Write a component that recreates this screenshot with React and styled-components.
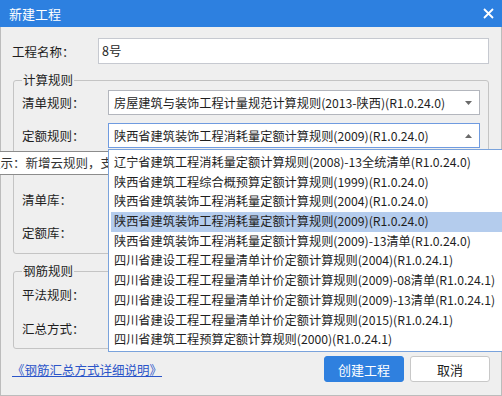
import React from "react";
import styled, { createGlobalStyle } from "styled-components";

const GlobalStyle = createGlobalStyle`
  body {
    margin: 0;
    background: #ffffff;
    font-family: "Noto Sans CJK SC", "Noto Sans", sans-serif;
  }
`;

const Window = styled.div`
  position: relative;
  width: 502px;
  height: 396px;
  display: flex;
  flex-direction: column;
  overflow: hidden;
  font-family: "Noto Sans CJK SC", "Noto Sans", sans-serif;
  font-size: 12.5px;
  color: #1e1e1e;
`;

const TitleBar = styled.div`
  height: 27px;
  flex: none;
  background: #2d80e0;
  color: #ffffff;
  display: flex;
  align-items: center;
  justify-content: space-between;
  padding: 0 8px 0 9px;
  font-size: 13px;
`;

const Body = styled.div`
  flex: 1;
  background: #efefef;
  border: 1px solid #bcbcbc;
  border-top: none;
  padding: 11px 11px 0 11px;
  display: flex;
  flex-direction: column;
`;

const NameRow = styled.div`
  display: flex;
  align-items: center;
  margin-right: 1px;
`;

const Label = styled.div`
  width: ${(p) => p.width || 86}px;
  flex: none;
  white-space: nowrap;
`;

const TextInput = styled.div`
  flex: 1;
  height: 26px;
  box-sizing: border-box;
  background: #ffffff;
  border: 1px solid #c6c9d0;
  padding: 0 3px;
  line-height: 24px;
`;

const Group = styled.fieldset`
  margin: ${(p) => p.top}px 1px 0 1px;
  padding: ${(p) => p.pt || 2}px 8px ${(p) => p.pb || 8}px 8px;
  border: 1px solid #c4c4c4;
  border-radius: 3px;
  display: flex;
  flex-direction: column;
  gap: ${(p) => p.gap || 8}px;
  min-width: 0;
`;

const Legend = styled.legend`
  padding: 0 1px;
  line-height: 16px;
`;

const Row = styled.div`
  display: flex;
  align-items: center;
  height: ${(p) => p.h || 25}px;
`;

const Select = styled.div`
  flex: 1;
  height: 25px;
  box-sizing: border-box;
  background: #ffffff;
  border: 1px solid ${(p) => (p.focused ? "#6f9be0" : "#b3b6bd")};
  display: flex;
  align-items: center;
  justify-content: space-between;
  padding: 0 7px 0 5px;
  white-space: nowrap;
  overflow: hidden;
  font-size: 12.2px;
`;

const Caret = ({ up }) => (
  <svg width="7" height="4" viewBox="0 0 7 4">
    <path d={up ? "M0 4 L3.5 0 L7 4 Z" : "M0 0 L7 0 L3.5 4 Z"} fill="#6a6a6a" />
  </svg>
);

const Footer = styled.div`
  margin-top: 7px;
  display: flex;
  align-items: center;
  justify-content: space-between;
`;

const HelpLink = styled.a`
  color: #2b55c9;
  text-decoration: underline;
  cursor: pointer;
`;

const Buttons = styled.div`
  display: flex;
  gap: 6px;
`;

const Button = styled.button`
  width: 80px;
  height: 26px;
  box-sizing: border-box;
  border-radius: 3px;
  font-family: inherit;
  font-size: 13px;
  padding: 0;
  background: ${(p) => (p.primary ? "#2f80df" : "#ffffff")};
  color: ${(p) => (p.primary ? "#ffffff" : "#1e1e1e")};
  border: 1px solid ${(p) => (p.primary ? "#2f80df" : "#c8c8c8")};
`;

const Tooltip = styled.div`
  position: absolute;
  left: -17px;
  top: 151px;
  height: 24px;
  box-sizing: border-box;
  background: #ffffff;
  border: 1px solid #8c8c8c;
  padding: 0 4px;
  line-height: 22px;
  white-space: nowrap;
  color: #333333;
  z-index: 1;
`;

const DropList = styled.ul`
  position: absolute;
  left: 108px;
  top: 149px;
  width: 400px;
  height: 203px;
  box-sizing: border-box;
  margin: 0;
  list-style: none;
  background: #ffffff;
  border: 1px solid #7aa3dc;
  padding: 3px 0 3px 2px;
  font-size: 12.2px;
  z-index: 2;
`;

const DropItem = styled.li`
  height: 19.7px;
  line-height: 19.7px;
  padding-left: 3px;
  white-space: nowrap;
  background: ${(p) => (p.active ? "#b4cced" : "transparent")};
`;

const CloseIcon = () => (
  <svg width="11" height="11" viewBox="0 0 11 11">
    <path d="M1 1 L10 10 M10 1 L1 10" stroke="#ffffff" strokeWidth="1.8" />
  </svg>
);

const quotaRules = [
  "辽宁省建筑工程消耗量定额计算规则(2008)-13全统清单(R1.0.24.0)",
  "陕西省建筑工程综合概预算定额计算规则(1999)(R1.0.24.0)",
  "陕西省建筑装饰工程消耗量定额计算规则(2004)(R1.0.24.0)",
  "陕西省建筑装饰工程消耗量定额计算规则(2009)(R1.0.24.0)",
  "陕西省建筑装饰工程消耗量定额计算规则(2009)-13清单(R1.0.24.0)",
  "四川省建设工程工程量清单计价定额计算规则(2004)(R1.0.24.1)",
  "四川省建设工程工程量清单计价定额计算规则(2009)-08清单(R1.0.24.1)",
  "四川省建设工程工程量清单计价定额计算规则(2009)-13清单(R1.0.24.1)",
  "四川省建设工程工程量清单计价定额计算规则(2015)(R1.0.24.1)",
  "四川省建筑工程预算定额计算规则(2000)(R1.0.24.1)",
];

const selected = quotaRules[3];

export default function App() {
  return (
    <>
      <GlobalStyle />
      <Window>
        <TitleBar>
          <span>新建工程</span>
          <CloseIcon />
        </TitleBar>
        <Body>
          <NameRow>
            <Label>工程名称：</Label>
            <TextInput>8号</TextInput>
          </NameRow>

          <Group top={8}>
            <Legend>计算规则</Legend>
            <Row>
              <Label>清单规则：</Label>
              <Select>
                <span>房屋建筑与装饰工程计量规范计算规则(2013-陕西)(R1.0.24.0)</span>
                <Caret />
              </Select>
            </Row>
            <Row>
              <Label>定额规则：</Label>
              <Select focused>
                <span>{selected}</span>
                <Caret up />
              </Select>
            </Row>
            <Row h={23} />
            <Row>
              <Label>清单库：</Label>
              <Select>
                <span>工程量清单项目计量规范(2013-陕西)</span>
                <Caret />
              </Select>
            </Row>
            <Row>
              <Label>定额库：</Label>
              <Select>
                <span>陕西省建筑装饰工程消耗量定额(2009)</span>
                <Caret />
              </Select>
            </Row>
          </Group>

          <Group top={9} pt={3} pb={7} gap={9}>
            <Legend>钢筋规则</Legend>
            <Row>
              <Label>平法规则：</Label>
              <Select>
                <span>16系平法规则</span>
                <Caret />
              </Select>
            </Row>
            <Row>
              <Label>汇总方式：</Label>
              <Select>
                <span>按外皮计算钢筋长度(不考虑弯曲调整值)</span>
                <Caret />
              </Select>
            </Row>
          </Group>

          <Footer>
            <HelpLink>《钢筋汇总方式详细说明》</HelpLink>
            <Buttons>
              <Button primary>创建工程</Button>
              <Button>取消</Button>
            </Buttons>
          </Footer>
        </Body>

        <Tooltip>提示：新增云规则，支持云端同步更新</Tooltip>

        <DropList>
          {quotaRules.map((r) => (
            <DropItem key={r} active={r === selected}>
              {r}
            </DropItem>
          ))}
        </DropList>
      </Window>
    </>
  );
}
